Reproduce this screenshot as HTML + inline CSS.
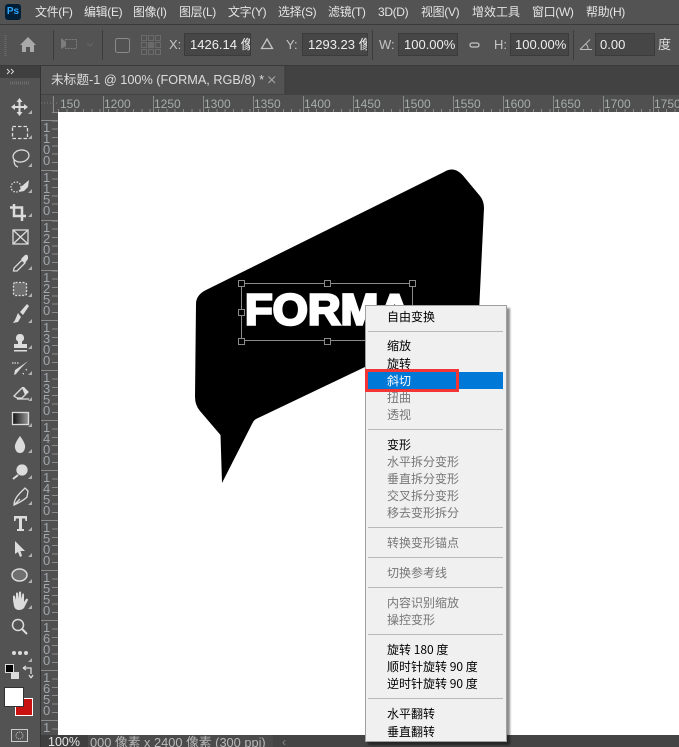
<!DOCTYPE html>
<html><head><meta charset="utf-8"><style>
html,body{margin:0;padding:0;background:#424242}
#r{position:relative;width:679px;height:747px;overflow:hidden;background:#424242;font-family:"Liberation Sans","Noto Sans CJK SC",sans-serif;color:#ddd;font-size:12px}
#r div,#r span.a{position:absolute;white-space:nowrap}
.m{top:4px;font-size:12px;line-height:16px;color:#e4e4e4;letter-spacing:-.35px}
.l{top:37px;font-size:13px;line-height:16px;color:#c4c4c4}
.i{top:33px;height:21px;background:#464646;border:1px solid #3b3b3b;line-height:21px;font-size:13px;color:#eee;overflow:hidden;padding-left:5px;box-sizing:content-box}
.h{top:97px;font-size:12px;line-height:14px;color:#a6adad}
.t{left:41px;width:17px}
.v{left:43px;width:9px;font-size:13px;line-height:11px;color:#a0a6ac;white-space:normal!important}
.c{left:387px;font-family:"WenQuanYi Zen Hei","Noto Sans CJK SC",sans-serif;font-size:12px;line-height:16px;color:#000}
.d{color:#777}
.s{left:368px;width:135px;height:1px;background:#b9b9b9}
</style></head><body><div id="r">
<div style="left:0;top:0;width:679px;height:24px;background:#535353"></div>
<div style="left:0;top:24px;width:679px;height:1px;background:#3a3a3a"></div>
<div style="left:0;top:25px;width:679px;height:40px;background:#535353"></div>
<div style="left:0;top:65px;width:679px;height:1px;background:#3a3a3a"></div>
<div style="left:5px;top:4px;width:16px;height:16px;background:#001e36;border-radius:3px;color:#31a8ff;font-size:10px;font-weight:bold;line-height:16px;text-align:center">Ps</div>
<div class="m" style="left:35px">文件(F)</div>
<div class="m" style="left:84px">编辑(E)</div>
<div class="m" style="left:133px">图像(I)</div>
<div class="m" style="left:179px">图层(L)</div>
<div class="m" style="left:228px">文字(Y)</div>
<div class="m" style="left:278px">选择(S)</div>
<div class="m" style="left:328px">滤镜(T)</div>
<div class="m" style="left:378px">3D(D)</div>
<div class="m" style="left:421px">视图(V)</div>
<div class="m" style="left:472px;letter-spacing:0">增效工具</div>
<div class="m" style="left:532px">窗口(W)</div>
<div class="m" style="left:586px">帮助(H)</div>

<div class="l" style="left:169px">X:</div>
<div class="i" style="left:184px;width:60px">1426.14 像素</div>
<div class="l" style="left:286px">Y:</div>
<div class="i" style="left:302px;width:59px">1293.23 像素</div>
<div class="l" style="left:379px">W:</div>
<div class="i" style="left:398px;width:53px">100.00%</div>
<div class="l" style="left:494px">H:</div>
<div class="i" style="left:510px;width:53px;padding-left:4px">100.00%</div>
<div class="i" style="left:595px;width:54px;padding-left:4px">0.00</div>
<div class="l" style="left:658px;color:#ddd">度</div>

<div style="left:0;top:66px;width:40px;height:681px;background:#535353"></div>
<div style="left:0;top:66px;width:40px;height:12px;background:#3f3f3f"></div>
<div style="left:40px;top:66px;width:1px;height:681px;background:#333"></div>
<div style="left:41px;top:66px;width:244px;height:28px;background:#535353"></div>
<div style="left:51px;top:71px;font-size:12.7px;line-height:18px;color:#ddd">未标题-1 @ 100% (FORMA, RGB/8) *</div>
<div style="left:41px;top:95px;width:638px;height:17px;background:#505050"></div>
<div style="left:41px;top:112px;width:17px;height:623px;background:#505050"></div>
<div style="left:58px;top:109px;width:621px;height:3px;background:repeating-linear-gradient(90deg,#8a8a8a 0 1px,transparent 1px 8.33px)"></div>
<div style="left:52px;top:112px;width:6px;height:623px;background:repeating-linear-gradient(180deg,#8a8a8a 0 1px,transparent 1px 8.33px)"></div>
<div class="h" style="left:60px">150</div>
<div class="h" style="left:104px">1200</div>
<div class="h" style="left:154px">1250</div>
<div class="h" style="left:204px">1300</div>
<div class="h" style="left:254px">1350</div>
<div class="h" style="left:304px">1400</div>
<div class="h" style="left:354px">1450</div>
<div class="h" style="left:404px">1500</div>
<div class="h" style="left:454px">1550</div>
<div class="h" style="left:504px">1600</div>
<div class="h" style="left:554px">1650</div>
<div class="h" style="left:604px">1700</div>
<div class="h" style="left:654px">1750</div>
<div style="left:53px;top:96px;width:1px;height:16px;background:#8a8a8a"></div>
<div style="left:103px;top:96px;width:1px;height:16px;background:#8a8a8a"></div>
<div style="left:153px;top:96px;width:1px;height:16px;background:#8a8a8a"></div>
<div style="left:203px;top:96px;width:1px;height:16px;background:#8a8a8a"></div>
<div style="left:253px;top:96px;width:1px;height:16px;background:#8a8a8a"></div>
<div style="left:303px;top:96px;width:1px;height:16px;background:#8a8a8a"></div>
<div style="left:353px;top:96px;width:1px;height:16px;background:#8a8a8a"></div>
<div style="left:403px;top:96px;width:1px;height:16px;background:#8a8a8a"></div>
<div style="left:453px;top:96px;width:1px;height:16px;background:#8a8a8a"></div>
<div style="left:503px;top:96px;width:1px;height:16px;background:#8a8a8a"></div>
<div style="left:553px;top:96px;width:1px;height:16px;background:#8a8a8a"></div>
<div style="left:603px;top:96px;width:1px;height:16px;background:#8a8a8a"></div>
<div style="left:653px;top:96px;width:1px;height:16px;background:#8a8a8a"></div>

<div class="t" style="top:120px;height:1px;background:#8a8a8a"></div>
<div class="t" style="top:170px;height:1px;background:#8a8a8a"></div>
<div class="t" style="top:220px;height:1px;background:#8a8a8a"></div>
<div class="t" style="top:270px;height:1px;background:#8a8a8a"></div>
<div class="t" style="top:320px;height:1px;background:#8a8a8a"></div>
<div class="t" style="top:370px;height:1px;background:#8a8a8a"></div>
<div class="t" style="top:420px;height:1px;background:#8a8a8a"></div>
<div class="t" style="top:470px;height:1px;background:#8a8a8a"></div>
<div class="t" style="top:520px;height:1px;background:#8a8a8a"></div>
<div class="t" style="top:570px;height:1px;background:#8a8a8a"></div>
<div class="t" style="top:620px;height:1px;background:#8a8a8a"></div>
<div class="t" style="top:670px;height:1px;background:#8a8a8a"></div>
<div class="t" style="top:720px;height:1px;background:#8a8a8a"></div>
<div class="v" style="top:122px">1<br>1<br>0<br>0</div>
<div class="v" style="top:172px">1<br>1<br>5<br>0</div>
<div class="v" style="top:222px">1<br>2<br>0<br>0</div>
<div class="v" style="top:272px">1<br>2<br>5<br>0</div>
<div class="v" style="top:322px">1<br>3<br>0<br>0</div>
<div class="v" style="top:372px">1<br>3<br>5<br>0</div>
<div class="v" style="top:422px">1<br>4<br>0<br>0</div>
<div class="v" style="top:472px">1<br>4<br>5<br>0</div>
<div class="v" style="top:522px">1<br>5<br>0<br>0</div>
<div class="v" style="top:572px">1<br>5<br>5<br>0</div>
<div class="v" style="top:622px">1<br>6<br>0<br>0</div>
<div class="v" style="top:672px">1<br>6<br>5<br>0</div>
<div class="v" style="top:722px;height:11px;overflow:hidden">1</div>

<div style="left:58px;top:112px;width:621px;height:623px;background:#fff"></div>

<svg style="position:absolute;left:0;top:0" width="679" height="747" viewBox="0 0 679 747">
<defs><linearGradient id="g" x1="0" x2="1" y1="0" y2="0"><stop offset="0" stop-color="#111"/><stop offset="1" stop-color="#9a9a9a"/></linearGradient></defs>
<!-- shape -->
<path fill="#000" d="M444 172Q452 167 459 172Q462 174 465 178L480 196Q484 201 484 208L479 312L400 350L365 367L256 419Q253 421 252 424L222 483L220.500 435L200 411Q195 405 195 397L196 304Q196 295 206 290Z"/>
<!-- FORMA -->
<text x="245" y="324.500" font-family="Liberation Sans" font-weight="700" font-size="44" fill="#fff" stroke="#fff" stroke-width="2.600" textLength="166" lengthAdjust="spacingAndGlyphs">FORMA</text>
<!-- selection -->
<rect x="241.500" y="283.500" width="171" height="57" fill="none" stroke="#8a8a8a"/>
<g fill="#000" stroke="#8a8a8a">
<rect x="238.500" y="280.500" width="6" height="6"/><rect x="324.500" y="280.500" width="6" height="6"/><rect x="409.500" y="280.500" width="6" height="6"/>
<rect x="238.500" y="309.500" width="6" height="6"/><rect x="238.500" y="338.500" width="6" height="6"/><rect x="324.500" y="338.500" width="6" height="6"/>
</g>
<!-- options -->
<g fill="none" stroke="#3c3c3c"><path d="M53.500 30V60M102.500 30V60M372.500 30V60M573.500 30V60"/></g>
<path d="M5.500 35V56" stroke="#6a6a6a" stroke-dasharray="1 1" stroke-width="2"/>
<path fill="#a9a9a9" d="M28 37L36 45H34V52H30V47H26V52H22V45H20Z"/>
<g stroke="#7d7d7d" fill="none"><rect x="65.500" y="39.500" width="11" height="9" stroke-dasharray="2 1"/></g>
<path fill="#7d7d7d" d="M61 38L66 42V46L61 49Z"/>
<path d="M87 43L90 46L93 43" fill="none" stroke="#666"/>
<rect x="115.500" y="38.500" width="14" height="14" rx="2" fill="none" stroke="#8a8a8a"/>
<g fill="none" stroke="#6b6b6b"><rect x="141.500" y="35.500" width="5" height="5"/><rect x="148.500" y="35.500" width="5" height="5"/><rect x="155.500" y="35.500" width="5" height="5"/><rect x="141.500" y="42.500" width="5" height="5"/><rect x="155.500" y="42.500" width="5" height="5"/><rect x="141.500" y="49.500" width="5" height="5"/><rect x="148.500" y="49.500" width="5" height="5"/><rect x="155.500" y="49.500" width="5" height="5"/></g>
<rect x="148" y="42" width="6" height="6" fill="#6b6b6b"/>
<path d="M267 39L272.500 48.500H261.500Z" fill="none" stroke="#c4c4c4" stroke-width="1.300"/>
<rect x="470" y="43" width="9" height="4" rx="2" fill="none" stroke="#c4c4c4" stroke-width="1.300"/>
<path d="M580 49.500H592M580 49.500L590 39.500M586 44Q588 46 588 49" fill="none" stroke="#bdbdbd"/>
<!-- panel head -->
<path d="M7 69L9.500 71.500L7 74M11 69L13.500 71.500L11 74" fill="none" stroke="#d8d8d8"/>
<path d="M10 83H29" stroke="#6d6d6d" stroke-width="3" stroke-dasharray="1 1"/>
<path d="M285 66V94" stroke="#3a3a3a"/>
<path d="M268.500 76.500L275 83M275 76.500L268.500 83" stroke="#aaa"/>
<path d="M53 97V111M41 103H58" stroke="#7a7a7a" stroke-dasharray="1 2"/>
<!-- tools -->
<g fill="none" stroke="#dcdcdc" stroke-width="1.300">
<path d="M19.500 100V114M12.500 107H26.500" stroke-width="2"/>
<path fill="#dcdcdc" stroke="none" d="M19.500 98L22.500 102H16.500ZM19.500 116L22.500 112H16.500ZM11 107L15 104V110ZM28 107L24 104V110Z"/>
<rect x="12.500" y="126.500" width="15" height="12" stroke-dasharray="3.500 2"/>
<ellipse cx="21" cy="156" rx="8" ry="6" transform="rotate(-10 21 156)"/><path d="M14 160Q14 166 18 167"/>
<circle cx="16" cy="187" r="5" stroke-dasharray="1.500 1.500"/>
<path fill="#dcdcdc" stroke="none" d="M29 180L22 186L19 192L24 191L28 187Z"/>
<path d="M14 204V216H26M10 207.500H22V221" stroke-width="2.500"/>
<rect x="13" y="230" width="15" height="14"/><path d="M13 230L28 244M28 230L13 244"/>
<path d="M13.500 271L14 268L22 260L25 263L17 271Z"/><path fill="#dcdcdc" stroke="none" d="M21 259L25 255Q28 254 28 257L28 259L25 263Z"/>
<rect x="13.500" y="282.500" width="13" height="13" rx="2" fill="#6f6f6f" stroke-dasharray="2 1.500"/>
<path fill="#dcdcdc" stroke="none" d="M27 304L20 312L23 315L29 306ZM18 313L15 320L13 323L18 322L21 317Z"/>
<path fill="#dcdcdc" stroke="none" d="M20 334a4 4 0 0 1 2 7.500V344H27V348H14V344H18V341.500a4 4 0 0 1 2-7.500ZM14 350H27V351.500H14Z"/>
<path fill="#dcdcdc" stroke="none" d="M28 361L21 368L16 374L14 375L15 370L21 366Z"/><path d="M12 363H19M23 373L24 375M26 369L27 371" stroke-dasharray="1.500 1"/>
<path d="M14 396L22 388Q23 387 24 388L28 392L22 398H17Z" /><path fill="#dcdcdc" stroke="none" d="M22 388L24 387L28 392L25 395Z"/><path d="M17 399H29"/>
<rect x="12.500" y="412.500" width="16" height="12" fill="url(#g)" stroke="#dcdcdc"/>
<path fill="#dcdcdc" stroke="none" d="M20 436Q14 444 15 448Q16 453 20 453Q24 453 25 448Q26 444 20 436Z"/>
<circle cx="22" cy="470" r="5" fill="#dcdcdc"/><path d="M18 475L13 479" stroke-width="2"/>
<path d="M14 505Q14 499 20 493L25 488L28 491L27 497Q23 501 14 505ZM14 505L20 499"/>
<path fill="#dcdcdc" stroke="none" d="M14 516H27V521H25.500L25 518.500H22V529H24V531H17V529H19V518.500H16L15.500 521H14Z"/>
<path fill="#dcdcdc" stroke="none" d="M15 541L25 551L20.500 551L22 556L20 557L18 552L15 554Z"/>
<ellipse cx="19.500" cy="575" rx="7.500" ry="6" fill="#6f6f6f" stroke-width="1.500"/>
<path fill="#dcdcdc" stroke="none" d="M13 600V596Q14 595 15 596L16 600L16 593Q17 592 18 593L18.500 599L19 592Q20 591 21 592L21.500 599L22.500 593.500Q24 593 24 595V602L26 599Q28 598 28 600L24 608Q22 610 19 610Q15 610 14 606Z"/>
<circle cx="18" cy="625" r="5.500" stroke-width="1.500"/><path d="M22 629L27 634" stroke-width="2"/>
</g>
<g fill="#dcdcdc"><circle cx="14" cy="653" r="2"/><circle cx="20" cy="653" r="2"/><circle cx="26" cy="653" r="2"/></g>
<g fill="#b0b0b0"><path d="M32 114V110L28 114Z M32 139V135L28 139Z M32 167V163L28 167Z M32 193V189L28 193ZM32 217V213L28 217ZM32 270V266L28 270ZM32 297V293L28 297ZM32 323V319L28 323ZM32 349V345L28 349ZM32 375V371L28 375ZM32 401V397L28 401ZM32 427V423L28 427ZM32 453V449L28 453ZM32 479V475L28 479ZM32 505V501L28 505ZM32 531V527L28 531ZM32 557V553L28 557ZM32 583V579L28 583ZM32 609V605L28 609ZM32 662V658L28 662Z"/></g>
<rect x="11" y="672" width="8" height="7" fill="#ddd"/><rect x="5.500" y="664.500" width="8" height="8" fill="#000" stroke="#ddd"/>
<path d="M23 668H31V674M23 668L26 666M23 668L26 670M31 678L29 675M31 678L33 675" fill="none" stroke="#dcdcdc" stroke-width="1.300"/>
<rect x="15.500" y="698.500" width="17" height="17" fill="#c81111" stroke="#fff"/>
<rect x="4.500" y="687.500" width="19" height="19" fill="#fff" stroke="#333"/>
<rect x="11.500" y="729.500" width="16" height="12" fill="none" stroke="#ccc"/><circle cx="19.500" cy="735.500" r="3.500" fill="none" stroke="#ccc" stroke-dasharray="1 1"/>
</svg>

<div style="left:41px;top:735px;width:638px;height:12px;background:#4b4b4b"></div>
<div style="left:41px;top:735px;width:47px;height:12px;background:#3f3f3f"></div>
<div style="left:273px;top:735px;width:406px;height:12px;background:#444"></div>
<div style="left:48px;top:735px;font-size:12.5px;line-height:15px;color:#e6e6e6">100%</div>
<div style="left:90px;top:735px;width:183px;overflow:hidden;font-size:12.8px;line-height:15px;color:#b8b8b8">000 像素 x 2400 像素 (300 ppi)</div>
<div style="left:282px;top:735px;font-size:12px;line-height:15px;color:#888">‹</div>

<!-- context menu -->
<div style="left:365px;top:305px;width:140px;height:435px;background:#f0f0f0;border:1px solid #a0a0a0;box-shadow:3px 3px 2px rgba(0,0,0,.45)"></div>
<div style="left:367px;top:372px;width:136px;height:17px;background:#0078d7"></div>
<div style="left:365px;top:369px;width:88px;height:17px;border:3px solid #f43535"></div>
<div class="c" style="top:309px">自由变换</div>
<div class="s" style="top:331px"></div>
<div class="c" style="top:338px">缩放</div>
<div class="c" style="top:356px">旋转</div>
<div class="c" style="top:373px;color:#fff">斜切</div>
<div class="c d" style="top:390px">扭曲</div>
<div class="c d" style="top:407px">透视</div>
<div class="s" style="top:429px"></div>
<div class="c" style="top:437px">变形</div>
<div class="c d" style="top:454px">水平拆分变形</div>
<div class="c d" style="top:471px">垂直拆分变形</div>
<div class="c d" style="top:488px">交叉拆分变形</div>
<div class="c d" style="top:505px">移去变形拆分</div>
<div class="s" style="top:527px"></div>
<div class="c d" style="top:535px">转换变形锚点</div>
<div class="s" style="top:557px"></div>
<div class="c d" style="top:565px">切换参考线</div>
<div class="s" style="top:587px"></div>
<div class="c d" style="top:595px">内容识别缩放</div>
<div class="c d" style="top:612px">操控变形</div>
<div class="s" style="top:634px"></div>
<div class="c" style="top:642px">旋转 180 度</div>
<div class="c" style="top:659px">顺时针旋转 90 度</div>
<div class="c" style="top:676px">逆时针旋转 90 度</div>
<div class="s" style="top:698px"></div>
<div class="c" style="top:706px">水平翻转</div>
<div class="c" style="top:724px">垂直翻转</div>
</div></body></html>
